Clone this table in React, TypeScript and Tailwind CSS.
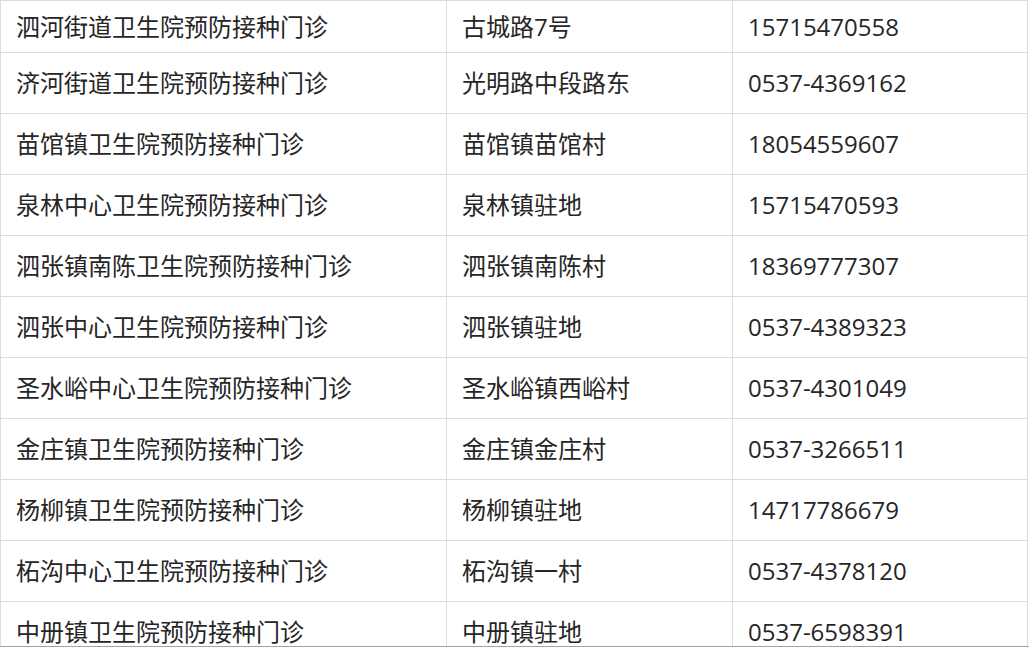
import React from "react";

const rows: [string, string, string][] = [
  ["泗河街道卫生院预防接种门诊", "古城路7号", "15715470558"],
  ["济河街道卫生院预防接种门诊", "光明路中段路东", "0537-4369162"],
  ["苗馆镇卫生院预防接种门诊", "苗馆镇苗馆村", "18054559607"],
  ["泉林中心卫生院预防接种门诊", "泉林镇驻地", "15715470593"],
  ["泗张镇南陈卫生院预防接种门诊", "泗张镇南陈村", "18369777307"],
  ["泗张中心卫生院预防接种门诊", "泗张镇驻地", "0537-4389323"],
  ["圣水峪中心卫生院预防接种门诊", "圣水峪镇西峪村", "0537-4301049"],
  ["金庄镇卫生院预防接种门诊", "金庄镇金庄村", "0537-3266511"],
  ["杨柳镇卫生院预防接种门诊", "杨柳镇驻地", "14717786679"],
  ["柘沟中心卫生院预防接种门诊", "柘沟镇一村", "0537-4378120"],
  ["中册镇卫生院预防接种门诊", "中册镇驻地", "0537-6598391"],
];

export default function App() {
  return (
    <div
      className="h-[647px] w-[1029px] overflow-hidden border-b border-[#a3a3a3] bg-white text-[24px] leading-none text-[#262626]"
      style={{ fontFamily: '"Open Sans", "Noto Sans CJK SC", sans-serif' }}
    >
      <div className="grid w-[1028px] grid-cols-[447px_286px_295px] border-t border-[#dcdcdc]">
        {rows.map(([name, addr, phone], i) => {
          const h = i === 0 ? "h-[52px]" : "h-[61px]";
          return (
            <React.Fragment key={i}>
              <div className={`${h} flex items-center border-x border-b border-[#dcdcdc] pl-[15px]`}>
                {name}
              </div>
              <div className={`${h} flex items-center border-r border-b border-[#dcdcdc] pl-[15px]`}>
                {addr}
              </div>
              <div className={`${h} flex items-center border-r border-b border-[#dcdcdc] pl-[15px]`}>
                {phone}
              </div>
            </React.Fragment>
          );
        })}
      </div>
    </div>
  );
}
